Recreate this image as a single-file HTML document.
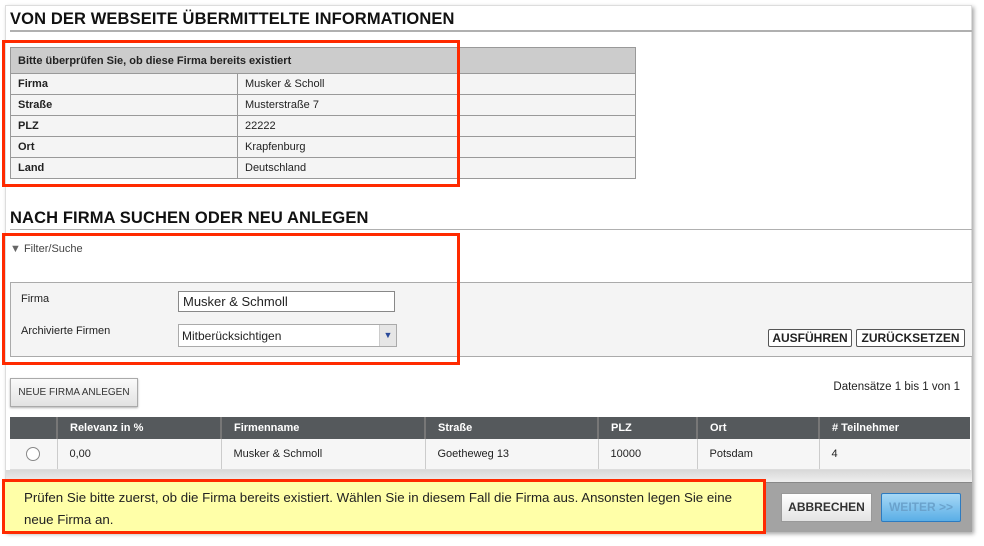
<!DOCTYPE html>
<html><head><meta charset="utf-8"><style>
*{margin:0;padding:0;box-sizing:border-box}
body{width:984px;height:546px;background:#fff;font-family:"Liberation Sans",Arial,sans-serif;color:#222;position:relative;overflow:hidden}
.a{position:absolute}
.panel{left:5px;top:5px;width:967px;height:527px;background:#fff;border:1px solid #ddd;box-shadow:2px 2px 4px rgba(0,0,0,.35)}
h1{position:absolute;font-size:16.5px;font-weight:bold;color:#111;letter-spacing:0.12px}
.hr{height:2px;background:#b0b0b0}
.red{border:3px solid #ff2a00}
table{border-collapse:collapse}
.info td{border:1px solid #999;font-size:11px;height:21px;padding:0 7px;background:#f4f4f4}
.info td:first-child{font-weight:bold}
.info th{background:#cccccc;border:1px solid #999;font-size:11px;text-align:left;height:26px;padding:0 7px}
.btn{border:1px solid #555;background:#fff;font-size:12px;font-weight:bold;text-align:center;line-height:16px;border-radius:2px}
.res th{background:#55595c;color:#fff;font-size:11px;text-align:left;font-weight:bold;height:22px;padding:0 12px;border-left:2px solid #777}
.res td{background:#f6f6f6;font-size:11px;height:30px;padding:0 12px;border-left:1px solid #ccc;border-bottom:1px solid #ddd}
</style></head><body>
<div class="a panel"></div>
<h1 style="left:10px;top:10px">VON DER WEBSEITE ÜBERMITTELTE INFORMATIONEN</h1>
<div class="a hr" style="left:10px;top:30px;width:962px"></div>
<table class="a info" style="left:10px;top:47px;width:626px">
<tr><th colspan="2">Bitte überprüfen Sie, ob diese Firma bereits existiert</th></tr>
<tr><td style="width:227px">Firma</td><td>Musker &amp; Scholl</td></tr>
<tr><td>Straße</td><td>Musterstraße 7</td></tr>
<tr><td>PLZ</td><td>22222</td></tr>
<tr><td>Ort</td><td>Krapfenburg</td></tr>
<tr><td>Land</td><td>Deutschland</td></tr>
</table>
<div class="a red" style="left:2px;top:40px;width:458px;height:147px"></div>
<h1 style="left:10px;top:209px">NACH FIRMA SUCHEN ODER NEU ANLEGEN</h1>
<div class="a hr" style="left:10px;top:229px;width:962px;height:1px"></div>
<div class="a" style="left:10px;top:243px;font-size:11px;color:#444"><span style="font-size:11px;color:#666">▼</span> Filter/Suche</div>
<div class="a" style="left:10px;top:282px;width:962px;height:75px;background:#f4f4f4;border-top:1px solid #aaa;border-bottom:1px solid #aaa;border-left:1px solid #aaa"></div>
<div class="a" style="left:21px;top:293px;font-size:11px">Firma</div>
<div class="a" style="left:178px;top:291px;width:217px;height:21px;background:#fff;border:1px solid #888;font-size:13px;padding:2px 4px">Musker &amp; Schmoll</div>
<div class="a" style="left:21px;top:325px;font-size:11px">Archivierte Firmen</div>
<div class="a" style="left:178px;top:324px;width:219px;height:23px;background:#fff;border:1px solid #aaa;font-size:12px;padding:4px 3px">Mitberücksichtigen</div>
<div class="a" style="left:379px;top:325px;width:17px;height:21px;background:#e6e6e6;border-left:1px solid #ccc;color:#2a4a9a;font-size:9px;text-align:center;line-height:21px">▼</div>
<div class="a btn" style="left:768px;top:329px;width:84px;height:18px">AUSFÜHREN</div>
<div class="a btn" style="left:856px;top:329px;width:109px;height:18px">ZURÜCKSETZEN</div>
<div class="a red" style="left:2px;top:233px;width:458px;height:132px"></div>
<div class="a" style="left:10px;top:378px;width:128px;height:29px;background:linear-gradient(#fafafa,#e2e2e2);border:1px solid #aaa;box-shadow:0 1px 2px rgba(0,0,0,.3);font-size:10px;color:#333;text-align:center;line-height:27px">NEUE FIRMA ANLEGEN</div>
<div class="a" style="right:24px;top:381px;font-size:11.5px">Datensätze 1 bis 1 von 1</div>
<table class="a res" style="left:10px;top:417px;width:960px">
<tr><th style="width:47px;border-left:0"></th><th style="width:164px">Relevanz in %</th><th style="width:204px">Firmenname</th><th style="width:173px">Straße</th><th style="width:99px">PLZ</th><th style="width:122px">Ort</th><th># Teilnehmer</th></tr>
<tr><td style="border-left:0;text-align:center"><span style="display:inline-block;width:14px;height:14px;border:1px solid #888;border-radius:50%;background:#fff;vertical-align:middle"></span></td><td>0,00</td><td>Musker &amp; Schmoll</td><td>Goetheweg 13</td><td>10000</td><td>Potsdam</td><td>4</td></tr>
</table>
<div class="a" style="left:6px;top:470px;width:966px;height:12px;background:linear-gradient(#d8d8d8,#efefef)"></div>
<div class="a" style="left:6px;top:482px;width:966px;height:50px;background:#a3a3a3;border-top:1px solid #888"></div>
<div class="a red" style="left:2px;top:479px;width:764px;height:55px;background:#ffffa8;font-size:13.3px;line-height:22px;padding:5px 24px 3px 19px;color:#222">Prüfen Sie bitte zuerst, ob die Firma bereits existiert. Wählen Sie in diesem Fall die Firma aus. Ansonsten legen Sie eine neue Firma an.</div>
<div class="a" style="left:781px;top:493px;width:91px;height:29px;background:linear-gradient(#fff,#e4e4e4);border:1px solid #999;font-size:12px;font-weight:bold;color:#333;text-align:center;line-height:27px">ABBRECHEN</div>
<div class="a" style="left:881px;top:493px;width:80px;height:29px;background:linear-gradient(#a6d8f6,#5aaee6);border:1px solid #2d7bc0;border-radius:2px;font-size:12px;font-weight:bold;color:#6aa2cc;text-align:center;line-height:27px">WEITER &gt;&gt;</div>
</body></html>
